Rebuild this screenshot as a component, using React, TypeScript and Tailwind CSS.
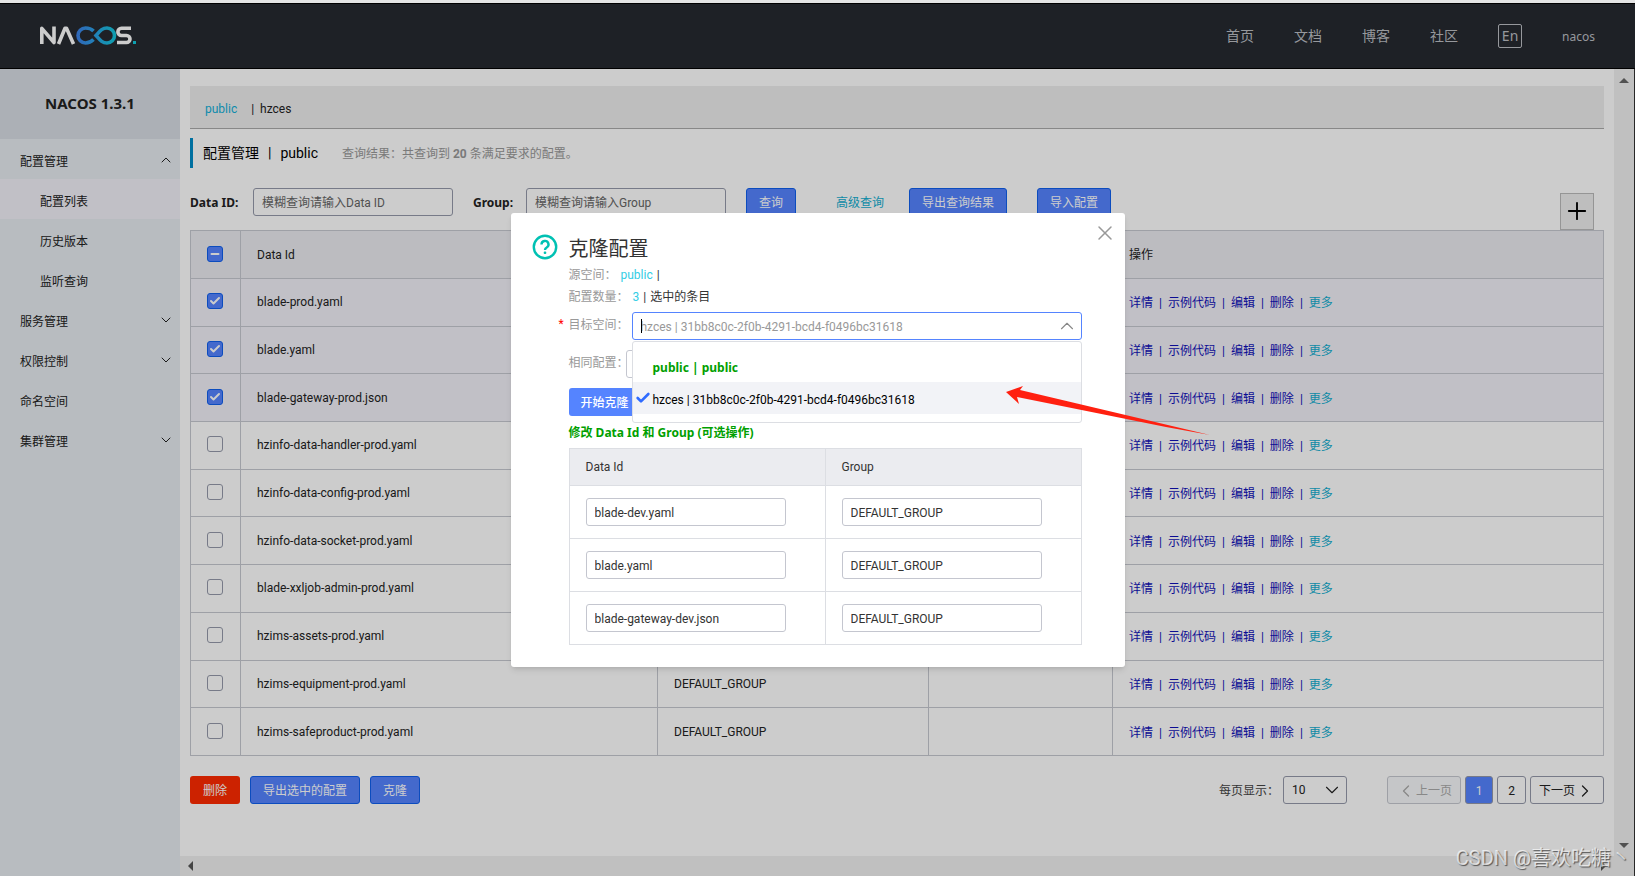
import React from 'react';
import { Check, ChevronDown, ChevronLeft, ChevronRight, ChevronUp, Minus, Plus, X } from 'lucide-react';

interface MenuItem {
  label: string;
  child?: boolean;
  active?: boolean;
  arrow?: 'up' | 'down';
}

interface ConfigRow {
  dataId: string;
  group: string;
  checked?: boolean;
}

const navLinks = ['首页', '文档', '博客', '社区'];

const menu: MenuItem[] = [
  { label: '配置管理', arrow: 'up' },
  { label: '配置列表', child: true, active: true },
  { label: '历史版本', child: true },
  { label: '监听查询', child: true },
  { label: '服务管理', arrow: 'down' },
  { label: '权限控制', arrow: 'down' },
  { label: '命名空间' },
  { label: '集群管理', arrow: 'down' },
];

const rows: ConfigRow[] = [
  { dataId: 'blade-prod.yaml', group: 'DEFAULT_GROUP', checked: true },
  { dataId: 'blade.yaml', group: 'DEFAULT_GROUP', checked: true },
  { dataId: 'blade-gateway-prod.json', group: 'DEFAULT_GROUP', checked: true },
  { dataId: 'hzinfo-data-handler-prod.yaml', group: 'DEFAULT_GROUP' },
  { dataId: 'hzinfo-data-config-prod.yaml', group: 'DEFAULT_GROUP' },
  { dataId: 'hzinfo-data-socket-prod.yaml', group: 'DEFAULT_GROUP' },
  { dataId: 'blade-xxljob-admin-prod.yaml', group: 'DEFAULT_GROUP' },
  { dataId: 'hzims-assets-prod.yaml', group: 'DEFAULT_GROUP' },
  { dataId: 'hzims-equipment-prod.yaml', group: 'DEFAULT_GROUP' },
  { dataId: 'hzims-safeproduct-prod.yaml', group: 'DEFAULT_GROUP' },
];

const cloneRows = ['blade-dev.yaml', 'blade.yaml', 'blade-gateway-dev.json'];

const Logo = () => (
  <svg width="97" height="19" viewBox="0 0 97 19" fill="none" aria-label="NACOS">
    <defs>
      <linearGradient id="loop" x1="36" y1="0" x2="76" y2="0" gradientUnits="userSpaceOnUse">
        <stop offset="0" stopColor="#3d7fe8" />
        <stop offset="0.5" stopColor="#2aa4e6" />
        <stop offset="1" stopColor="#12c8dc" />
      </linearGradient>
    </defs>
    <g stroke="#fff" strokeWidth="3.600" strokeLinejoin="round">
      <path d="M1.800 18V2.300L14 16.500V0.500" />
      <path d="M18.500 18L25 2.300h1.500L33.500 18" />
      <path d="M91 2.300H81.500a3.600 3.600 0 0 0 0 7.200h5a3.500 3.500 0 0 1 0 7H77" />
    </g>
    <path
      d="M53.500 5C51.500 3 49 2 45.500 2a7.200 7.200 0 0 0 0 15c3.500 0 6-1.500 8-3.500M56 9.500C60 5 62 2 67 2a7.200 7.200 0 0 1 0 15c-5 0-7-3-11-7.500z"
      stroke="url(#loop)"
      strokeWidth="3.600"
    />
    <rect x="93" y="15" width="3" height="3" fill="#12c8dc" />
  </svg>
);

const Checkbox: React.FC<{ checked?: boolean; partial?: boolean; label: string }> = ({ checked, partial, label }) => (
  <span className="relative block w-4 h-4 ml-4">
    <input
      type="checkbox"
      aria-label={label}
      defaultChecked={checked || partial}
      className="block w-4 h-4 appearance-none rounded-[3px] border border-[#9599aa] bg-white checked:border-[#0f5fee] checked:bg-[#5584ff]"
    />
    {checked && <Check size={12} strokeWidth={4} className="absolute top-0.5 left-0.5 text-white" />}
    {partial && <Minus size={12} strokeWidth={4} className="absolute top-0.5 left-0.5 text-white" />}
  </span>
);

const primaryButton = 'h-7 px-3 pt-0.5 rounded-[3px] border border-[#0f5fee] bg-[#5584ff] text-white whitespace-nowrap';
const searchInput = 'w-[200px] h-7 px-2 pt-0.5 rounded-[3px] border border-[#9599aa] bg-white placeholder:text-[#666]';
const pageButton = 'flex items-center justify-center h-7 pt-0.5 rounded-[3px] border border-[#9599aa]';
const boldText = "font-['Noto_Sans','Noto_Sans_CJK_SC',sans-serif] font-bold";

const Header = () => (
  <header className="flex items-center justify-between h-[66px] pl-10 pr-10 bg-[#262a30] border-y border-black font-['Noto_Sans','Noto_Sans_CJK_SC',sans-serif]">
    <a href="#" className="pb-0.5">
      <Logo />
    </a>
    <nav className="flex items-center gap-10 text-sm text-[#bcbfc4]">
      {navLinks.map((item) => (
        <a key={item} href="#">
          {item}
        </a>
      ))}
      <button className="w-6 h-6 leading-5 border border-[#bcbfc4] rounded-[2px]">En</button>
      <a href="#" className="pt-0.5 text-xs">
        nacos
      </a>
    </nav>
  </header>
);

const Sidebar = () => (
  <aside className="w-[180px] shrink-0 bg-[#e7ecf1]">
    <h1 className={`h-[70px] leading-[68px] text-center text-[15px] bg-[#d7dce4] ${boldText}`}>NACOS 1.3.1</h1>
    <ul>
      {menu.map((item) => (
        <li key={item.label} className={item.active ? 'bg-[#f2f1f8]' : ''}>
          <a
            href="#"
            className={`flex items-center justify-between h-10 pt-1.5 pr-1.5 ${item.child ? 'pl-10' : 'pl-5'}`}
          >
            {item.label}
            {item.arrow === 'up' && <ChevronUp size={16} strokeWidth={1.5} className="mb-1" />}
            {item.arrow === 'down' && <ChevronDown size={16} strokeWidth={1.5} className="mb-1" />}
          </a>
        </li>
      ))}
    </ul>
  </aside>
);

const ConfigTable = () => (
  <table className="w-full h-[526px] table-fixed border-collapse text-left">
    <thead>
      <tr className="h-12 bg-[#ebecf0]">
        <th className="w-[50px] pb-0.5 border border-[#c6c9d0]">
          <Checkbox partial label="全选" />
        </th>
        <th className="w-[417px] px-4 font-normal border border-[#c6c9d0]">Data Id</th>
        <th className="w-[271px] px-4 font-normal border border-[#c6c9d0]">Group</th>
        <th className="w-[184px] px-4 font-normal border border-[#c6c9d0]">归属应用</th>
        <th className="px-4 font-normal border border-[#c6c9d0]">操作</th>
      </tr>
    </thead>
    <tbody>
      {rows.map((row) => (
        <tr key={row.dataId} className={row.checked ? 'bg-[#f2f1f8]' : 'bg-white'}>
          <td className="pb-0.5 border border-[#c6c9d0]">
            <Checkbox checked={row.checked} label={row.dataId} />
          </td>
          <td className="px-4 border border-[#c6c9d0]">{row.dataId}</td>
          <td className="px-4 border border-[#c6c9d0]">{row.group}</td>
          <td className="px-4 border border-[#c6c9d0]" />
          <td className="px-4 pt-0.5 border border-[#c6c9d0]">
            <div className="flex gap-1.5 text-[#1010b8]">
              <a href="#">详情</a>
              <span>|</span>
              <a href="#">示例代码</a>
              <span>|</span>
              <a href="#">编辑</a>
              <span>|</span>
              <a href="#">删除</a>
              <span>|</span>
              <a href="#" className="text-[#12aed0]">
                更多
              </a>
            </div>
          </td>
        </tr>
      ))}
    </tbody>
  </table>
);

const Pagination = () => (
  <div className="flex items-center">
    <label htmlFor="page-size" className="pt-0.5 text-[#444]">
      每页显示：
    </label>
    <div className="relative ml-1 mr-10">
      <select
        id="page-size"
        className="block w-16 h-7 pl-2 appearance-none rounded-[3px] border border-[#9599aa] bg-white"
      >
        <option>10</option>
        <option>20</option>
      </select>
      <ChevronDown size={22} strokeWidth={1.2} className="absolute top-[3px] right-1 pointer-events-none" />
    </div>
    <div className="flex gap-1">
      <button disabled className={`${pageButton} w-[74px] border-[#c6c9d0] bg-[#f7f8fa] text-[#aaa]`}>
        <ChevronLeft size={20} strokeWidth={1.5} />
        上一页
      </button>
      <button className={`${pageButton} w-7 border-[#0f5fee] bg-[#5584ff] text-white`}>1</button>
      <button className={`${pageButton} w-[29px]`}>2</button>
      <button className={`${pageButton} w-[74px]`}>
        下一页
        <ChevronRight size={20} strokeWidth={1.5} />
      </button>
    </div>
  </div>
);

const CloneDialog = () => (
  <div
    role="dialog"
    aria-label="克隆配置"
    className="relative w-[614px] pt-[21px] pb-[22px] pl-[58px] pr-[43px] rounded-[3px] bg-white shadow-md text-[#333]"
  >
    <button aria-label="关闭" className="absolute top-2 right-2 text-[#999]">
      <X size={24} strokeWidth={1.5} />
    </button>
    <svg className="absolute top-[21px] left-[21px]" width="26" height="26" viewBox="0 0 26 26" fill="none">
      <circle cx="13" cy="13" r="11.200" stroke="#00c1b3" strokeWidth="2.400" />
      <path d="M9.500 10.500a3.500 3.500 0 1 1 5.200 3c-1.200.7-1.700 1.200-1.700 2.400" stroke="#00c1b3" strokeWidth="2.400" />
      <rect x="11.700" y="17.500" width="2.600" height="2.600" rx="1" fill="#00c1b3" />
    </svg>

    <h2 className="h-[30px] leading-[30px] text-xl">克隆配置</h2>
    <p className="flex gap-1 h-[22px] leading-[22px]">
      <span className="text-[#999]">源空间：</span>
      <span className="text-[#33cde5]">public</span>
      <span>|</span>
    </p>
    <p className="flex gap-1 h-[22px] leading-[22px]">
      <span className="text-[#999]">配置数量：</span>
      <span className="text-[#33cde5]">3</span>
      <span>|</span>
      <span>选中的条目</span>
    </p>

    <div className="relative flex items-start mt-1 h-7">
      <span className="absolute top-1 -left-2.5 text-[#f00]">*</span>
      <label htmlFor="target" className="w-[63px] shrink-0 leading-[26px] text-[#999]">
        目标空间：
      </label>
      <div className="relative flex-1">
        <input
          id="target"
          placeholder="hzces | 31bb8c0c-2f0b-4291-bcd4-f0496bc31618"
          className="block w-full h-7 pl-2 pt-0.5 rounded-[3px] border border-[#5584ff] placeholder:text-[#999]"
        />
        <span className="absolute top-[7px] left-[9px] w-px h-3.5 bg-black" />
        <ChevronUp size={22} strokeWidth={1.2} className="absolute top-[3px] right-1 text-[#888]" />
        <ul
          role="listbox"
          className="absolute top-[29px] left-0 z-10 w-full py-2 rounded-[3px] border border-[#dcdee3] bg-white text-black"
        >
          <li role="option" aria-selected="false" className={`h-8 pt-1 pl-5 leading-7 text-[#00a000] ${boldText}`}>
            public | public
          </li>
          <li role="option" aria-selected="true" className="relative h-8 pt-1 pl-5 leading-7 bg-[#f2f3f7]">
            <Check size={16} strokeWidth={4} className="absolute top-2 left-0.5 text-[#2f6bff]" />
            hzces | 31bb8c0c-2f0b-4291-bcd4-f0496bc31618
          </li>
        </ul>
      </div>
    </div>

    <div className="flex mt-[10px]">
      <label htmlFor="policy" className="w-[57px] shrink-0 leading-[26px] text-[#999] whitespace-nowrap">
        相同配置：
      </label>
      <select id="policy" className="w-[130px] h-7 px-2 appearance-none rounded-[3px] border border-[#c4c6cf]" />
    </div>

    <button className="block mt-[10px] h-7 px-3 pt-0.5 rounded-[3px] bg-[#5584ff] font-medium text-white">开始克隆</button>
    <p className={`h-8 pt-0.5 leading-[30px] text-[#00a000] ${boldText}`}>修改 Data Id 和 Group (可选操作)</p>

    <table className="w-full table-fixed border-collapse text-left">
      <thead>
        <tr className="h-[37px] bg-[#ebecf0]">
          <th className="px-4 font-normal border border-[#dcdee3]">Data Id</th>
          <th className="px-4 font-normal border border-[#dcdee3]">Group</th>
        </tr>
      </thead>
      <tbody>
        {cloneRows.map((dataId) => (
          <tr key={dataId} className="h-[53px]">
            <td className="px-4 border border-[#dcdee3]">
              <input
                aria-label="Data Id"
                defaultValue={dataId}
                className="block w-[200px] h-7 px-2 pt-0.5 rounded-[3px] border border-[#c4c6cf]"
              />
            </td>
            <td className="px-4 border border-[#dcdee3]">
              <input
                aria-label="Group"
                defaultValue="DEFAULT_GROUP"
                className="block w-[200px] h-7 px-2 pt-0.5 rounded-[3px] border border-[#c4c6cf]"
              />
            </td>
          </tr>
        ))}
      </tbody>
    </table>

    {/* red pointer towards the selected namespace */}
    <svg className="absolute z-20 top-[173px] left-[495px]" width="206" height="52" viewBox="0 0 206 52" fill="#ff2010">
      <path d="M0 6L17 0L14 4L204 49L160 41L11 11L13 18z" />
    </svg>
  </div>
);

export default function App() {
  return (
    <div className="flex flex-col min-h-screen bg-white font-['Roboto','Noto_Sans_CJK_SC',sans-serif] text-xs text-[#222]">
      <div className="h-[3px] shrink-0 bg-[#e4e4e4]" />
      <div className="relative flex flex-col flex-1">
        <Header />
        <div className="flex flex-1">
          <Sidebar />
          <div className="flex flex-col flex-1 min-w-0">
            <main className="flex-1 px-[10px] pt-[17px]">
              <div className="flex items-center h-[43px] px-[15px] pt-1 gap-3.5 bg-[#eee] border-b border-[#aaa]">
                <a href="#" className="text-[#12aed8]">
                  public
                </a>
                <span>| &nbsp;hzces</span>
              </div>

              <div className="flex items-center h-[30px] mt-[9px] pl-2.5 border-l-3 border-[#008cc8]">
                <h2 className="flex gap-[9px] text-sm text-black">
                  <span>配置管理</span>
                  <span>|</span>
                  <span>public</span>
                </h2>
                <span className="ml-6 pt-0.5 text-[#999]">
                  查询结果：共查询到 <strong>20</strong> 条满足要求的配置。
                </span>
              </div>

              <div className="flex items-end justify-between mt-5">
                <div className="flex items-center h-[42px] pb-[14px]">
                  <label htmlFor="data-id" className={`w-[63px] pt-0.5 ${boldText}`}>
                    Data ID:
                  </label>
                  <input id="data-id" placeholder="模糊查询请输入Data ID" className={searchInput} />
                  <label htmlFor="group" className={`w-[53px] ml-5 pt-0.5 ${boldText}`}>
                    Group:
                  </label>
                  <input id="group" placeholder="模糊查询请输入Group" className={searchInput} />
                  <button className={`${primaryButton} ml-5`}>查询</button>
                  <a href="#" className="ml-10 mr-[25px] pt-0.5 text-[#12aed0]">
                    高级查询
                  </a>
                  <button className={primaryButton}>导出查询结果</button>
                  <button className={`${primaryButton} ml-[30px]`}>导入配置</button>
                </div>
                <button
                  aria-label="新建配置"
                  className="flex items-center justify-center w-[34px] h-[37px] mr-2.5 pb-0.5 border border-[#bbb] bg-[#eee] text-black"
                >
                  <Plus size={28} strokeWidth={1.6} />
                </button>
              </div>

              <ConfigTable />

              <div className="flex items-center justify-between mt-5">
                <div className="flex gap-2.5">
                  <button className="h-7 px-[13px] pt-0.5 rounded-[3px] bg-[#ff2b00] text-white">删除</button>
                  <button className={primaryButton}>导出选中的配置</button>
                  <button className={primaryButton}>克隆</button>
                </div>
                <Pagination />
              </div>
            </main>
            <div className="flex items-center justify-between h-5 px-2 bg-[#f1f1f1]">
              <span className="border-y-5 border-r-5 border-y-transparent border-r-[#555]" />
              <span className="border-y-5 border-l-5 border-y-transparent border-l-[#555]" />
            </div>
          </div>
          <div className="flex flex-col justify-between items-center w-5 pt-[9px] pb-[28px] bg-[#f1f1f1]">
            <span className="border-x-5 border-b-5 border-x-transparent border-b-[#666]" />
            <span className="border-x-5 border-t-5 border-x-transparent border-t-[#666]" />
          </div>
          <div className="w-px bg-[#333]" />
        </div>

        <div className="absolute inset-0 flex items-center justify-center bg-black/20">
          <CloneDialog />
        </div>
        <p className="absolute right-1 bottom-1 text-xl leading-7 text-white/70 [text-shadow:1px_1px_1px_#555]">
          CSDN @喜欢吃糖丶
        </p>
      </div>
    </div>
  );
}
